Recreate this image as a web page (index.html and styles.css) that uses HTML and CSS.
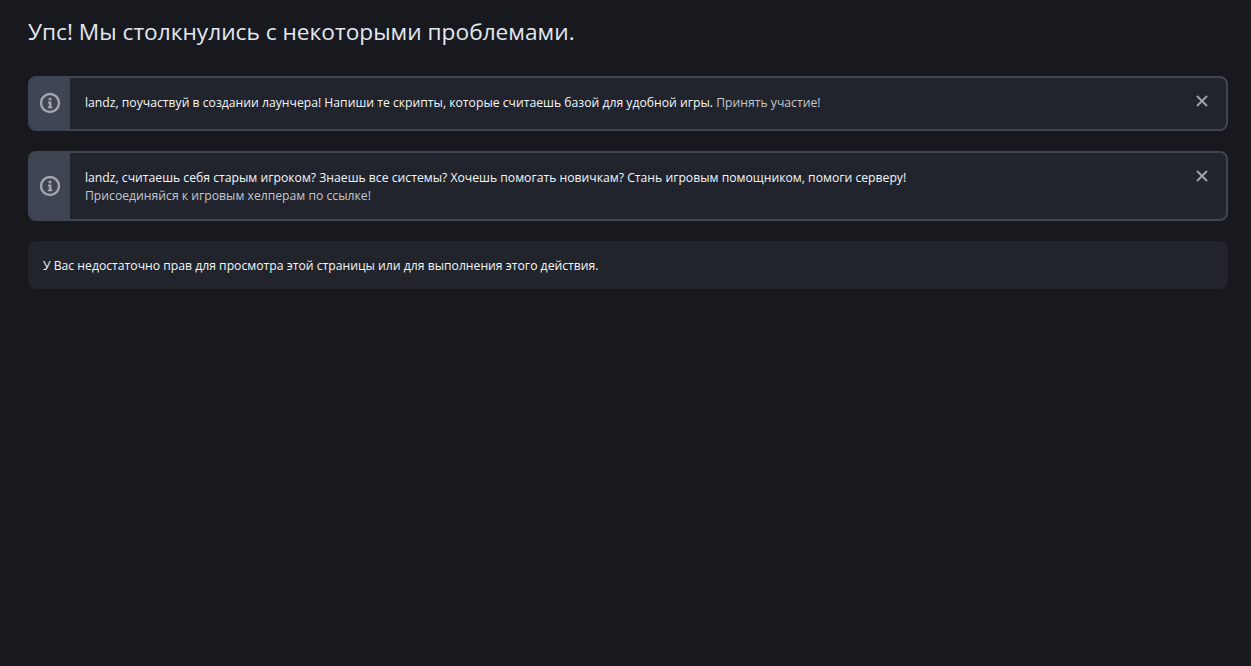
FILE: index.html
```html
<!DOCTYPE html>
<html lang="ru">
<head>
    <meta charset="UTF-8">
    <meta name="viewport" content="width=device-width, initial-scale=1.0">
    <title>Ошибка</title>
    <link rel="stylesheet" href="styles.css">
</head>
<body>
    <h1 class="page-title">Упс! Мы столкнулись с некоторыми проблемами.</h1>

    <!-- Notices -->
    <div class="notice">
        <div class="notice-icon">
            <svg width="22" height="22" viewBox="0 0 22 22"><circle cx="11" cy="11" r="9" fill="none" stroke="currentColor" stroke-width="2.4"/><circle cx="11" cy="6.900" r="1.5" fill="currentColor"/><path d="M9 9.600h3.400v4.800h1v1.800H8.800v-1.800h1.200v-3H9z" fill="currentColor"/></svg>
        </div>
        <div class="notice-text">
            landz, поучаствуй в создании лаунчера! Напиши те скрипты, которые считаешь базой для удобной игры. <a href="#">Принять участие!</a>
        </div>
        <span class="notice-close"><svg width="12" height="12" viewBox="0 0 12 12"><path d="M1 1l10 10M11 1L1 11" stroke="currentColor" stroke-width="2" fill="none"/></svg></span>
    </div>

    <div class="notice">
        <div class="notice-icon">
            <svg width="22" height="22" viewBox="0 0 22 22"><circle cx="11" cy="11" r="9" fill="none" stroke="currentColor" stroke-width="2.4"/><circle cx="11" cy="6.900" r="1.5" fill="currentColor"/><path d="M9 9.600h3.400v4.800h1v1.800H8.800v-1.800h1.200v-3H9z" fill="currentColor"/></svg>
        </div>
        <div class="notice-text">
            landz, считаешь себя старым игроком? Знаешь все системы? Хочешь помогать новичкам? Стань игровым помощником, помоги серверу!<br>
            <a href="#">Присоединяйся к игровым хелперам по ссылке!</a>
        </div>
        <span class="notice-close"><svg width="12" height="12" viewBox="0 0 12 12"><path d="M1 1l10 10M11 1L1 11" stroke="currentColor" stroke-width="2" fill="none"/></svg></span>
    </div>

    <div class="message">У Вас недостаточно прав для просмотра этой страницы или для выполнения этого действия.</div>
</body>
</html>
```

FILE: styles.css
```css
* {
    margin: 0;
    padding: 0;
    box-sizing: border-box;
}

html, body {
    height: 100%;
}

body {
    background: #17191e;
    color: #f4f6fa;
    font-family: 'Open Sans', sans-serif;
    font-size: 12.2px;
    line-height: 18px;
    padding: 17px 23px 0 28px;
}

.page-title {
    font-size: 22.7px;
    font-weight: 400;
    line-height: 30px;
    color: #e3e8f2;
    margin-bottom: 29px;
}

/* Notices */
.notice {
    display: flex;
    align-items: stretch;
    min-height: 55px;
    background: #21242c;
    border: 2px solid #3f4552;
    border-radius: 8px;
    margin-bottom: 20px;
    position: relative;
    overflow: hidden;
}

.notice-icon {
    display: flex;
    align-items: center;
    justify-content: center;
    flex: 0 0 40px;
    padding: 0 1px 1px 0;
    background: #3f4552;
    color: #a3a6ac;
}

.notice-text {
    padding: 16px 14px 14px 15px;
}

.notice-text a {
    color: #c1c7d2;
    text-decoration: none;
}

.notice-close {
    position: absolute;
    top: 17px;
    right: 18px;
    line-height: 0;
    color: #a0a2a7;
}

.message {
    background: #21242b;
    border-radius: 8px;
    padding: 16px 15px 14px;
}
```
